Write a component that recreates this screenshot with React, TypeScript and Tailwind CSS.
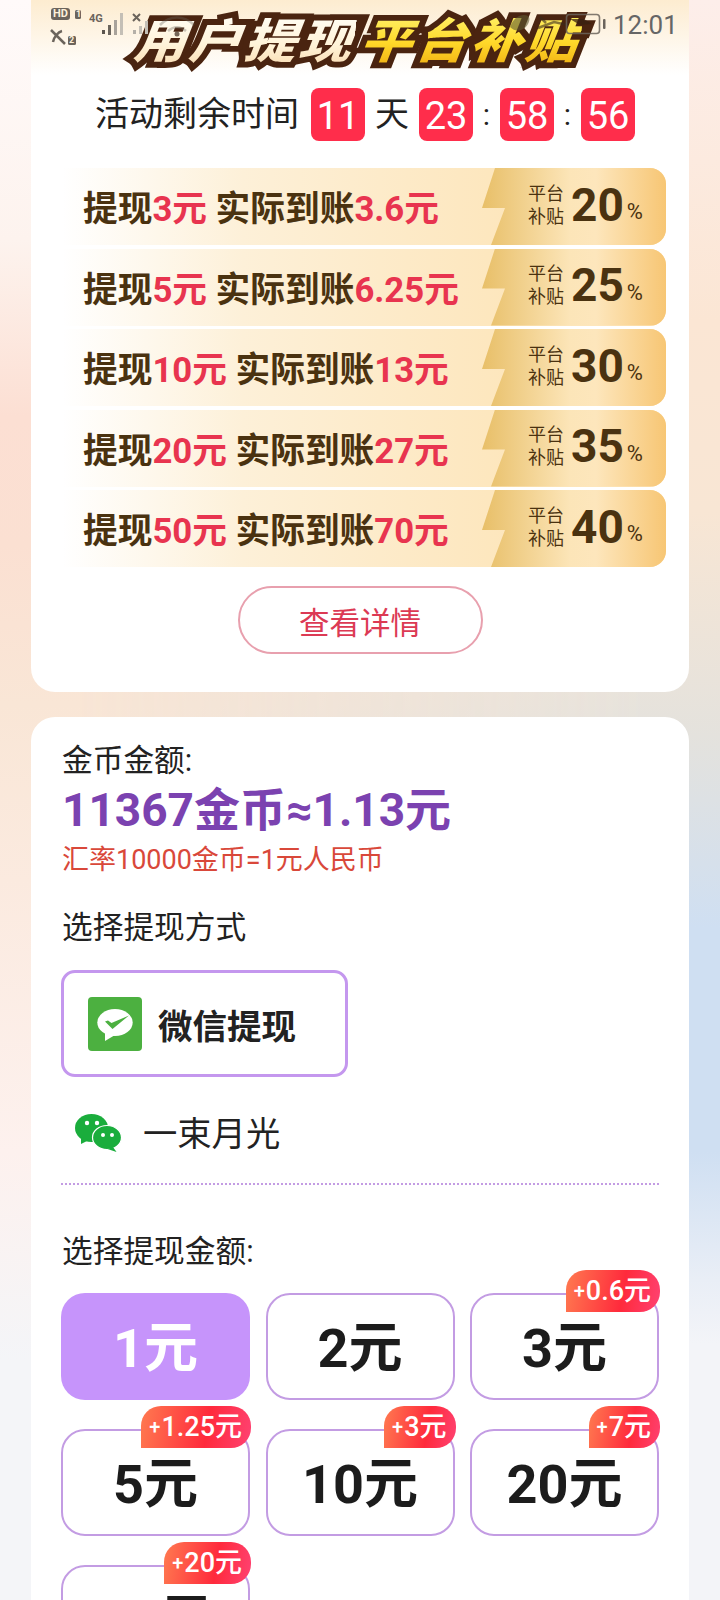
import type { ReactNode } from "react";

const TIERS = [
  { take: "3", real: "3.6", pct: "20" },
  { take: "5", real: "6.25", pct: "25" },
  { take: "10", real: "13", pct: "30" },
  { take: "20", real: "27", pct: "35" },
  { take: "50", real: "70", pct: "40" },
];

const AMOUNTS = [
  { value: "1元", selected: true },
  { value: "2元" },
  { value: "3元", bonus: "0.6元" },
  { value: "5元", bonus: "1.25元" },
  { value: "10元", bonus: "3元" },
  { value: "20元", bonus: "7元" },
  { value: "50元", bonus: "20元" },
];

function StatusBar() {
  return (
    <div className="absolute left-0 top-0 z-10 h-[50px] w-[720px] text-[#6b645c]">
      <svg width="720" height="50" viewBox="0 0 720 50" fill="none" className="absolute left-0 top-0">
        {/* left cluster: hd, sim marks, signal */}
        <rect x="51" y="8" width="19" height="12" rx="3" fill="#6b645c" />
        <rect x="75" y="10" width="6" height="9" rx="1.5" fill="#6b645c" />
        <path d="M51 30l14 14M62 31c-4 1-8 6-9 11" stroke="#6b645c" strokeWidth="2.5" />
        <rect x="68" y="36" width="8" height="9" rx="1.5" fill="#6b645c" />
        <rect x="102" y="30" width="3" height="4" fill="#5b554e" />
        <rect x="108" y="25" width="3" height="10" fill="#5b554e" opacity="0.9" />
        <rect x="114" y="20" width="3" height="15" fill="#a8a29a" />
        <rect x="120" y="13" width="3" height="22" fill="#c4bfb6" />
        <path d="M133 14l7 7M140 14l-7 7" stroke="#6b645c" strokeWidth="2" />
        <rect x="133" y="30" width="3" height="4" fill="#b5b0a8" />
        <rect x="139" y="26" width="3" height="8" fill="#c4bfb6" />
        <rect x="145" y="21" width="3" height="13" fill="#c4bfb6" />
        {/* wifi and muted icons, mostly behind the title art */}
        <path d="M160 25c10-10 24-10 34 0M168 31c6-5 12-5 18 0" stroke="#6b645c" strokeOpacity="0.35" strokeWidth="2.5" />
        <circle cx="177" cy="34" r="2.5" fill="#3a2a1c" fillOpacity="0.7" />
        <path d="M510 27c3-8 8-12 14-12 5 0 7 3 4 9-4 7-12 9-18 3z" fill="#5f5a30" fillOpacity="0.6" />
        <path d="M540 17l6 6M538 28l16-6 14 3" stroke="#3a2a1c" strokeOpacity="0.6" strokeWidth="2.5" />
        {/* battery */}
        <rect x="566.5" y="14.5" width="33" height="19" rx="3" stroke="#6b645c" strokeOpacity="0.85" strokeWidth="1.6" />
        <path d="M570 19h14l8 5-12 1z" fill="#3a2010" fillOpacity="0.75" />
        <rect x="603" y="19" width="2.5" height="10" rx="1" fill="#6b645c" />
      </svg>
      <span className="absolute left-[53px] top-[7px] text-[11px] font-bold leading-[14px] text-[#fdf0da]">HD</span>
      <span className="absolute left-[76px] top-[8px] text-[9px] font-bold leading-[13px] text-[#fdf0da]">1</span>
      <span className="absolute left-[69px] top-[34px] text-[9px] font-bold leading-[13px] text-[#fdf0da]">2</span>
      <span className="absolute left-[89px] top-[12px] text-[11px] font-bold leading-[14px]">4G</span>
      <span className="absolute left-[613px] top-[9px] text-[26px] leading-[32px] text-[#666]">12:01</span>
    </div>
  );
}

function TitleWord({ children, fill }: { children: string; fill: string }) {
  return (
    <span className="relative inline-block">
      <span className="text-transparent [-webkit-text-stroke:13px_#4a2410]">{children}</span>
      <span className={`absolute left-0 top-0 bg-clip-text text-transparent ${fill}`}>{children}</span>
    </span>
  );
}

function TimeBox({ children }: { children: ReactNode }) {
  return (
    <span className="flex h-[53px] w-[54px] items-center justify-center rounded-lg bg-[#ff2d4b] pt-[3px] text-[38px] text-[#fff]">
      {children}
    </span>
  );
}

function Tier({ take, real, pct }: { take: string; real: string; pct: string }) {
  return (
    <div className="flex h-[77px] items-center overflow-hidden rounded-r-2xl bg-[linear-gradient(to_right,#ffffff,#fdf0d8_30%,#fde6bc_75%)]">
      <div className="flex-1 whitespace-nowrap pl-[21px] pt-[6px] text-[34.7px] font-bold text-[#4a3210]">
        提现<span className="text-[#e8344f]">{take}元</span> 实际到账<span className="text-[#e8344f]">{real}元</span>
      </div>
      <div className="flex h-full w-[184px] items-center bg-[linear-gradient(to_right,#e8bf68,#fce5b8_48%,#fde6bc_62%,#f7c674)] pb-[4px] pl-[46px] [clip-path:polygon(13px_0,100%_0,100%_100%,9px_100%,23px_40px,0_40px)]">
        <div className="w-[38px] text-[18px] leading-[23px] text-[#4a3210]">
          平台
          <br />
          补贴
        </div>
        <span className="ml-[5px] text-[46px] font-bold leading-none text-[#4a3210]">{pct}</span>
        <span className="ml-[3px] mt-[14px] text-[22px] text-[#4a3210]">%</span>
      </div>
    </div>
  );
}

function WechatPayIcon() {
  return (
    <svg width="54" height="54" viewBox="0 0 54 54">
      <rect width="54" height="54" rx="4" fill="#4cb040" />
      <ellipse cx="27" cy="25.5" rx="17.7" ry="13.5" fill="#fff" />
      <path d="M17 35l0 9 10-6z" fill="#fff" />
      <path d="M17 24.5l3-1 3.5 2.5L41 18.5 24.5 32z" fill="#4cb040" />
    </svg>
  );
}

function WechatIcon() {
  return (
    <svg width="47" height="38" viewBox="0 0 47 38">
      <ellipse cx="16.5" cy="14" rx="16.5" ry="14" fill="#1aad3c" />
      <path d="M6 23l0 7 8-4z" fill="#1aad3c" />
      <ellipse cx="32" cy="23.5" rx="14.5" ry="12" fill="#1aad3c" stroke="#fff" strokeWidth="1.2" />
      <path d="M38 33l3.5 5-9-3z" fill="#1aad3c" />
      <circle cx="12" cy="9" r="2.2" fill="#fff" />
      <circle cx="22" cy="9" r="2.2" fill="#fff" />
      <circle cx="28" cy="21" r="2" fill="#fff" />
      <circle cx="37" cy="21" r="2" fill="#fff" />
    </svg>
  );
}

function AmountButton({ value, selected, bonus }: { value: string; selected?: boolean; bonus?: string }) {
  return (
    <div
      className={`relative flex h-[107px] items-center justify-center rounded-[24px] pt-[4px] text-[54px] font-bold ${
        selected ? "bg-[#c694fb] text-[#fff]" : "border-2 border-[#c39ce3] bg-[#fff] text-[#1c1c1c]"
      }`}
    >
      {value}
      {bonus && (
        <span className="absolute right-[-3px] top-[-25px] flex h-[42px] items-center whitespace-nowrap rounded-t-[20px] rounded-br-[20px] bg-[linear-gradient(100deg,#ff7a50,#ff2a3c_60%,#ff4272)] pl-[8px] pr-[9px] text-[27px] font-medium text-[#fff]">
          <span className="mr-[1px] text-[20px]">+</span>
          {bonus}
        </span>
      )}
    </div>
  );
}

export default function App() {
  return (
    <div className="relative h-[1600px] w-[720px] overflow-hidden bg-[linear-gradient(to_bottom,#fffafa,#fdf3ee_15%,#fcdfd3_26%,#fbe0d2_34%,#f9e6d6_44%,#fbeadf_55%,#fdf1ee_72%,#f4f5f8_85%,#f4f5f8)] font-['Roboto','Noto_Sans_CJK_SC',sans-serif]">
      <div className="absolute inset-0 bg-[linear-gradient(to_bottom,#fdeeea,#fbe6d4_20%,#f8e6d4_32%,#e4e2dd_46%,#cfdff2_58%,#cfdff2_72%,#e9eef6_80%,#f3f4f8_84%)] [mask-image:linear-gradient(to_right,transparent_10%,black_90%)]" />
      <StatusBar />

      <div className="relative">
        <section className="mx-[31px] rounded-b-[24px] bg-[linear-gradient(to_bottom,#fdecd0,#ffffff_75px)] pb-[38px]">
          <div className="flex h-[88px] items-start justify-center whitespace-nowrap pr-[6px] pt-[10px] text-[52px] font-black italic leading-[64px] tracking-[3px] scale-y-90 -skew-x-6">
            <TitleWord fill="bg-[linear-gradient(to_bottom,#fffdf5,#fff3d8_55%,#f9d9ac)]">用户提现</TitleWord>
            <span className="w-[6px]" />
            <TitleWord fill="bg-[linear-gradient(to_bottom,#fff26a,#ffd92a_50%,#eeaa10)]">平台补贴</TitleWord>
          </div>

          <div className="flex items-center pl-[64px] text-[34px] text-[#222]">
            <span className="mr-[12px] w-[204px] whitespace-nowrap">活动剩余时间</span>
            <TimeBox>11</TimeBox>
            <span className="mx-[10px] w-[34px]">天</span>
            <TimeBox>23</TimeBox>
            <span className="w-[27px] text-center text-[30px]">:</span>
            <TimeBox>58</TimeBox>
            <span className="w-[27px] text-center text-[30px]">:</span>
            <TimeBox>56</TimeBox>
          </div>

          <div className="mt-[27px] flex flex-col gap-[3.5px] pl-[31px] pr-[23px]">
            {TIERS.map((t) => (
              <Tier key={t.pct} {...t} />
            ))}
          </div>

          <div className="mt-[19px] flex justify-center">
            <div className="flex h-[68px] w-[245px] items-center justify-center rounded-full border-2 border-[#e8a0ae] pt-[7px] text-[30.5px] text-[#dc3a54]">
              查看详情
            </div>
          </div>
        </section>

        <section className="mx-[31px] mt-[25px] rounded-t-[24px] bg-[#fff] px-[30px] pt-[24px] text-[#222]">
          <div className="pl-[1px] text-[30.7px] leading-[40px]">金币金额:</div>
          <div className="mt-[1px] pl-[1px] text-[46px] font-bold leading-[56px] text-[#7b42b0]">11367金币≈1.13元</div>
          <div className="mt-[4px] pl-[1px] text-[27px] leading-[36px] text-[#d9483a]">汇率10000金币=1元人民币</div>

          <div className="mt-[30px] pl-[1px] text-[30.7px] leading-[40px]">选择提现方式</div>
          <div className="mt-[22px] flex h-[107px] w-[287px] items-center rounded-[14px] border-[3px] border-[#c497ee] pl-[24px]">
            <WechatPayIcon />
            <span className="ml-[16px] pt-[9px] text-[34.5px] font-bold text-[#222]">微信提现</span>
          </div>
          <div className="mt-[28px] flex h-[56px] items-center pl-[14px]">
            <WechatIcon />
            <span className="ml-[21px] pt-[4px] text-[34.3px]">一束月光</span>
          </div>
          <div className="mt-[22px] border-t-2 border-dotted border-[#c39ce3]" />

          <div className="mt-[47px] pl-[1px] text-[30.7px] leading-[40px]">选择提现金额:</div>
          <div className="mt-[21px] grid grid-cols-3 gap-x-[15.5px] gap-y-[29px]">
            {AMOUNTS.map((a) => (
              <AmountButton key={a.value} {...a} />
            ))}
          </div>
        </section>
      </div>
    </div>
  );
}
